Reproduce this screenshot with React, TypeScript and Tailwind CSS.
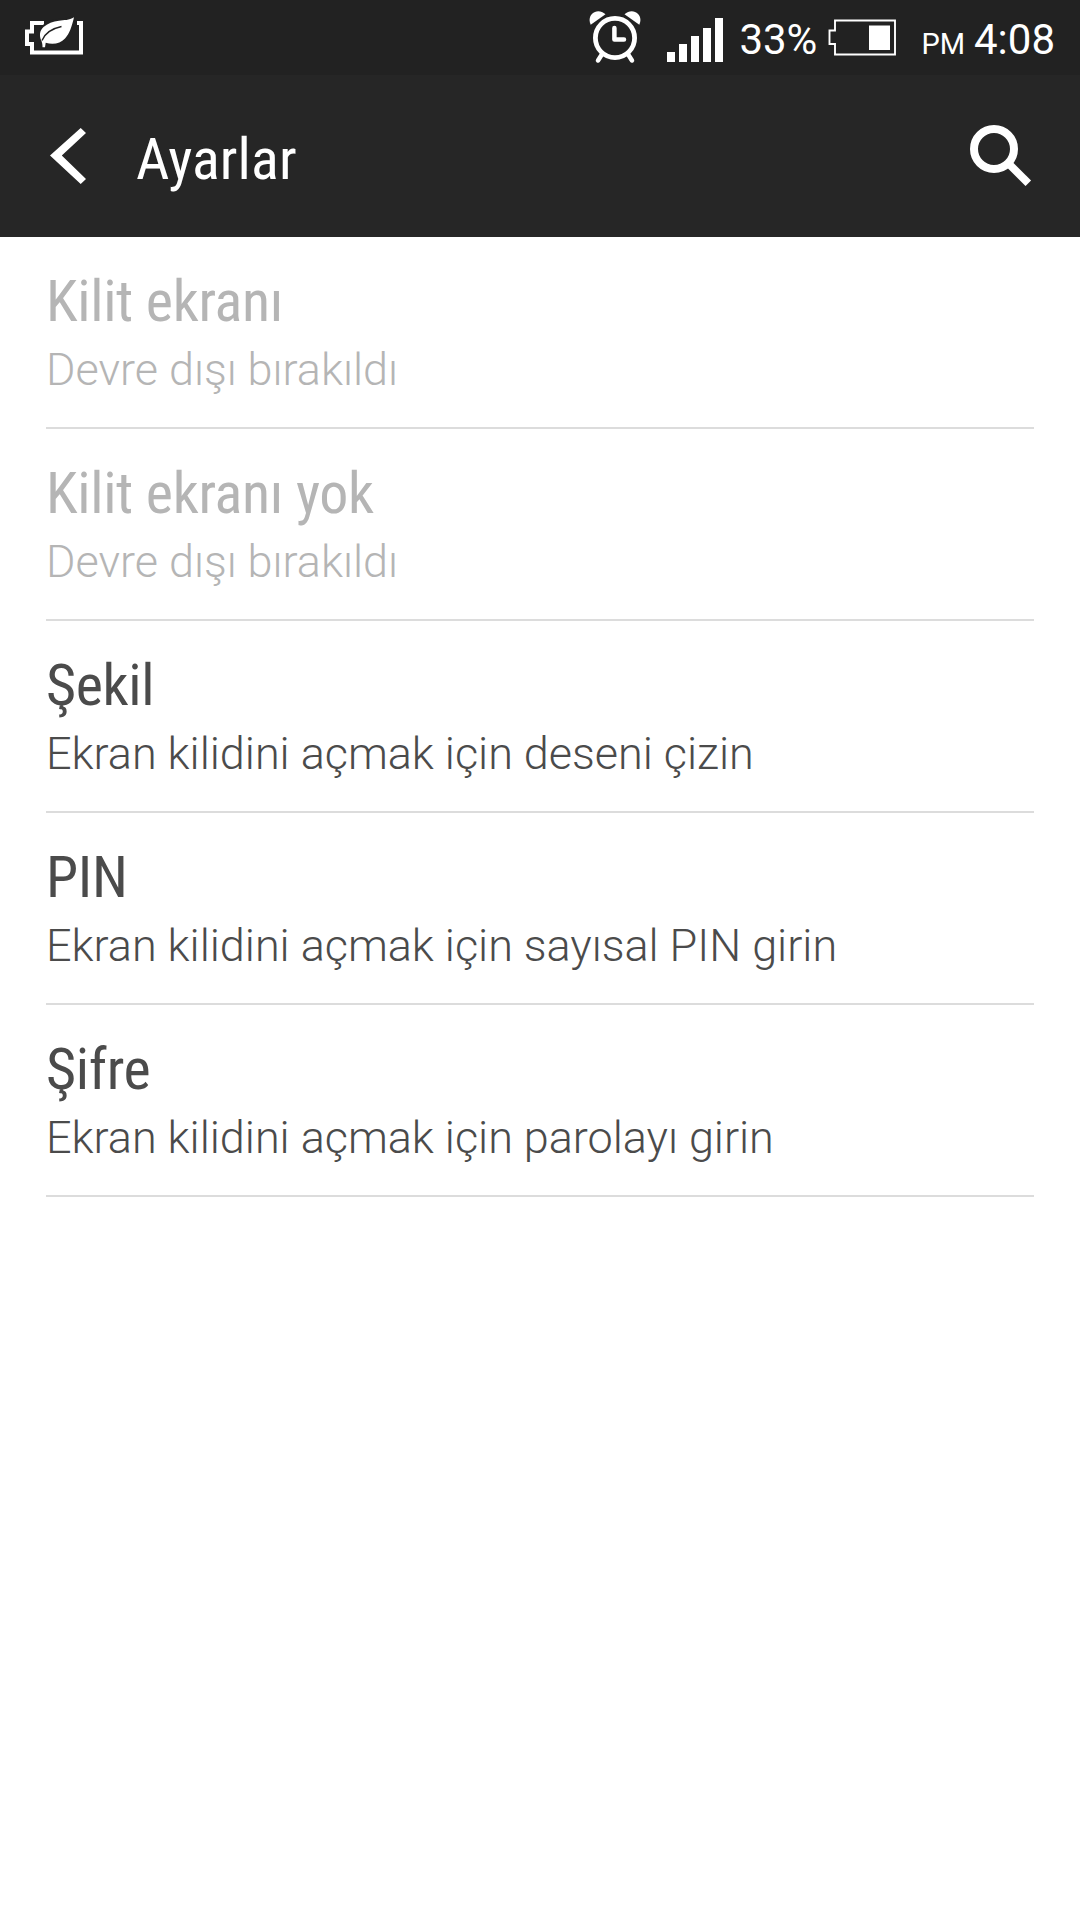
interface LockOption {
  title: string;
  description: string;
  disabled?: boolean;
}

const lockOptions: LockOption[] = [
  { title: "Kilit ekranı", description: "Devre dışı bırakıldı", disabled: true },
  { title: "Kilit ekranı yok", description: "Devre dışı bırakıldı", disabled: true },
  { title: "Şekil", description: "Ekran kilidini açmak için deseni çizin" },
  { title: "PIN", description: "Ekran kilidini açmak için sayısal PIN girin" },
  { title: "Şifre", description: "Ekran kilidini açmak için parolayı girin" },
];

const PowerSaverIcon = () => (
  <svg width="64" height="42" viewBox="0 0 64 42" fill="none">
    <path d="M22 7H10v8.500H5V28h5v8.500h49V7h-4" stroke="#fff" strokeWidth="4" />
    <path
      d="M52 1.300C47 4.500 42 4 37 4.700C31 5.200 25.500 7.500 21.500 11C17.500 14.500 17.300 19.500 19 24C20 26 20.500 28 20.500 31.300H23L23.700 26.700C31 29 38.500 27.500 43 22.500C47.500 18 50 10 52 1.300Z"
      fill="#fff"
      stroke="#222"
      strokeWidth="4"
      paintOrder="stroke"
    />
    <path d="M20 24.500C23 17 30 12.500 39.500 10.500" stroke="#222" strokeWidth="1.400" />
  </svg>
);

const AlarmIcon = () => (
  <svg width="54" height="56" viewBox="0 0 54 56" fill="none">
    <g fill="#fff">
      <path d="M1.700 15.700C-3 6 8-2.500 16.500 5.300Z" />
      <path d="M50.300 15.700C55 6 44-2.500 35.500 5.300Z" />
    </g>
    <g stroke="#fff" strokeLinecap="round">
      <circle cx="26" cy="29" r="19.600" strokeWidth="4.800" />
      <path d="M25.400 19v11.500H35" strokeWidth="4.500" strokeLinejoin="round" />
      <path d="M12.500 46L9 51.500M39.500 46L43 51.500" strokeWidth="4.500" />
    </g>
  </svg>
);

const SignalIcon = () => (
  <svg width="56" height="44" viewBox="0 0 56 44" fill="#fff">
    <path d="M0 34h8v10H0zM12 26h8v18h-8zM24 18h8v26h-8zM36 10h8v34h-8zM48 0h8v44h-8z" />
  </svg>
);

const BatteryIcon = () => (
  <svg width="68" height="38" viewBox="0 0 68 38" fill="none">
    <path d="M7 1.500H67v34H7V25H1.500V11.500H7z" stroke="#fff" strokeWidth="1.900" />
    <path d="M41 6.500h21v24.500H41z" fill="#fff" />
  </svg>
);

const StatusBar = () => (
  <div className="flex h-[75px] items-start justify-between bg-[#222222] text-white">
    <div className="pl-[22px] pt-4">
      <PowerSaverIcon />
    </div>
    <div className="flex items-start pr-[25px]">
      <div className="pt-[9px]">
        <AlarmIcon />
      </div>
      <div className="ml-[24px] pt-[18px]">
        <SignalIcon />
      </div>
      <span className="ml-[16px] w-[80px] whitespace-nowrap pt-[15px] text-[42px] leading-[50px]">33%</span>
      <div className="ml-[9px] pt-[19px]">
        <BatteryIcon />
      </div>
      <div className="ml-[25px] flex items-baseline whitespace-nowrap pt-[15px] leading-[50px]">
        <span className="text-[29px]">PM</span>
        <span className="ml-[9px] text-[42px]">4:08</span>
      </div>
    </div>
  </div>
);

const Header = () => (
  <header className="flex h-[162px] items-start bg-[#262626] text-white">
    <svg className="ml-[48px] mt-[51px]" width="40" height="60" viewBox="0 0 40 60" fill="#fff">
      <path d="M32.700 2L38 7L13.800 29.600L38 53L32.700 58L2 29.600Z" />
    </svg>
    <h1 className="ml-[48px] mt-[50px] text-[58px] font-normal leading-[68px] tracking-[0.1px] [font-stretch:75%]">
      Ayarlar
    </h1>
    <svg className="ml-auto mr-[48px] mt-[50px]" width="62" height="62" viewBox="0 0 62 62" fill="none">
      <circle cx="24" cy="24" r="20" stroke="#fff" strokeWidth="8" />
      <path d="M38 38L58.300 58.300" stroke="#fff" strokeWidth="7.800" />
    </svg>
  </header>
);

const LockOptionItem = ({ option }: { option: LockOption }) => (
  <li
    className={`h-[192px] border-b-2 border-[#dcdcdc] pt-[30px] ${
      option.disabled ? "text-[#b5b5b5]" : "text-[#4b4b4b]"
    }`}
  >
    <h2 className="whitespace-nowrap text-[58px] font-normal leading-[68px] tracking-[-0.37px] [font-stretch:75%]">
      {option.title}
    </h2>
    <p className="mt-[7px] whitespace-nowrap text-[45px] font-light leading-[56px] tracking-[-0.03px]">
      {option.description}
    </p>
  </li>
);

const App = () => {
  return (
    <div className="min-h-[1920px] w-[1080px] bg-white font-[Roboto,sans-serif]">
      <StatusBar />
      <Header />
      <ul className="px-[46px]">
        {lockOptions.map((option) => (
          <LockOptionItem key={option.title} option={option} />
        ))}
      </ul>
    </div>
  );
};

export default App;
